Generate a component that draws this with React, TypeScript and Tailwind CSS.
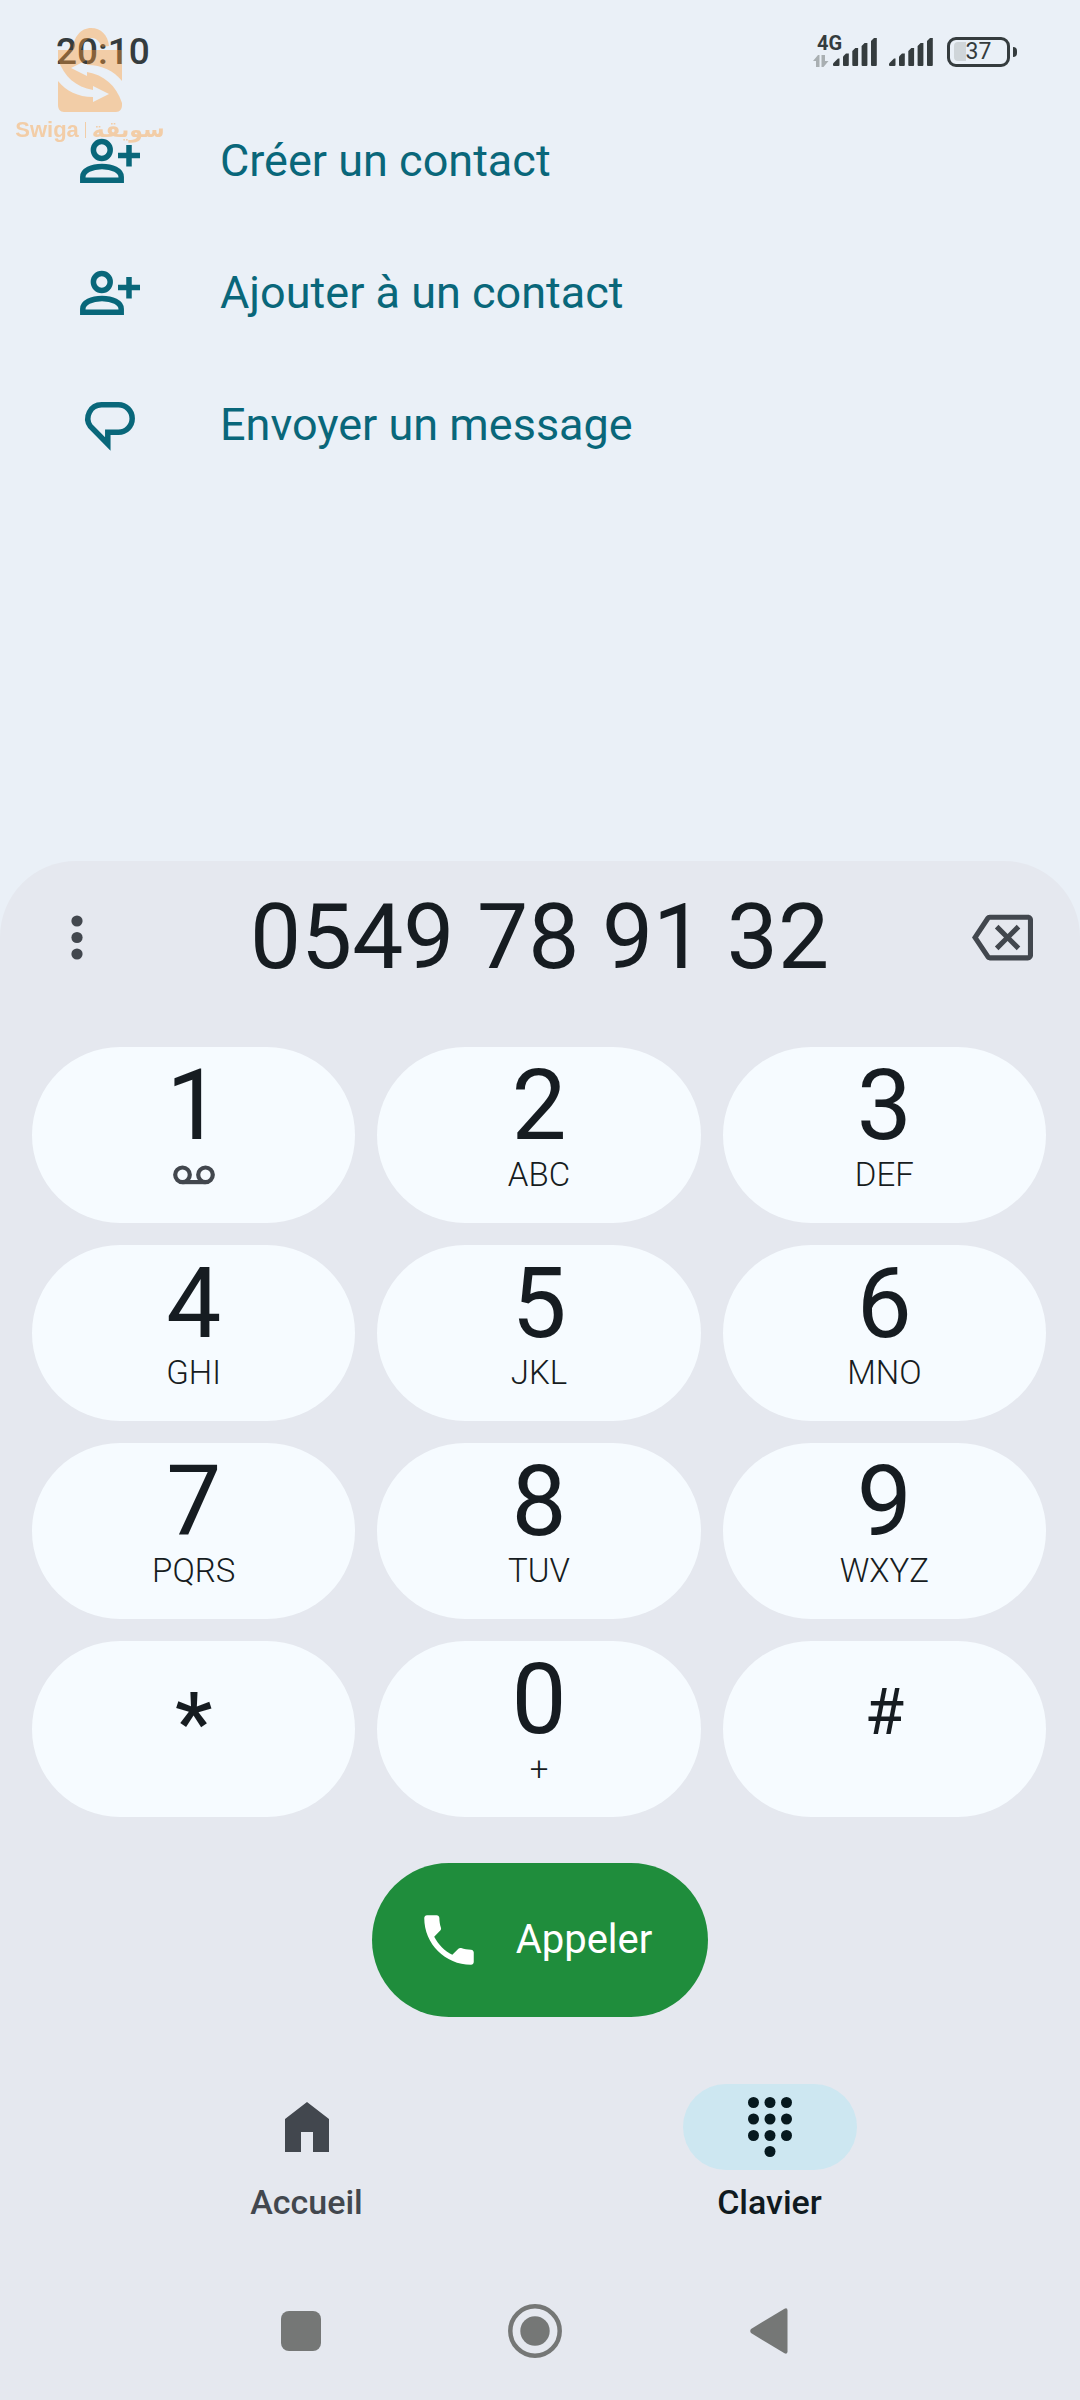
import { MdOutlineBackspace, MdPhone } from 'react-icons/md'

type Key = {
  digit: string
  letters?: string
}

const KEYS: Key[] = [
  { digit: '1' },
  { digit: '2', letters: 'ABC' },
  { digit: '3', letters: 'DEF' },
  { digit: '4', letters: 'GHI' },
  { digit: '5', letters: 'JKL' },
  { digit: '6', letters: 'MNO' },
  { digit: '7', letters: 'PQRS' },
  { digit: '8', letters: 'TUV' },
  { digit: '9', letters: 'WXYZ' },
  { digit: '*' },
  { digit: '0', letters: '+' },
  { digit: '#' },
]

const DIGIT_STYLES: Record<string, string> = {
  '*': 'text-[84px] leading-[144px] font-medium',
  '#': 'text-[64px] leading-[124px]',
}

const SignalBars = () => (
  <svg width="45" height="30" viewBox="0 0 45 30" fill="currentColor" aria-hidden="true">
    <path d="M0 28v-1.500l5-5h1.500v6.500a1 1 0 0 1-1 1h-4.500a1 1 0 0 1-1-1z" />
    <path d="M10 19.500l3-3h2.800v11.500a1 1 0 0 1-1 1h-3.800a1 1 0 0 1-1-1z" />
    <path d="M19.300 14l3-3h2.800v17a1 1 0 0 1-1 1h-3.800a1 1 0 0 1-1-1z" />
    <path d="M28.600 9l3-3h2.800v22a1 1 0 0 1-1 1h-3.800a1 1 0 0 1-1-1z" />
    <path d="M38 4l3-3h2.800v27a1 1 0 0 1-1 1h-3.800a1 1 0 0 1-1-1z" />
  </svg>
)

const Battery = ({ level }: { level: number }) => (
  <div className="flex items-center gap-[3px]">
    <div className="relative flex h-[30px] w-[63px] items-center justify-center rounded-[9px] border-[3px] border-current">
      <span className="absolute left-1 h-[19px] w-3 rounded-l-sm bg-[#cfd5d9]" />
      <span className="relative text-[23px] leading-6">{level}</span>
    </div>
    <span className="h-[10px] w-1 rounded-r-sm bg-current" />
  </div>
)

const StatusBar = () => (
  <header className="flex h-[95px] items-center justify-between pt-2 pr-[63px] pl-14 text-[#353c3e]">
    <span className="text-[37px] leading-10 font-medium">20:10</span>
    <div className="flex items-center">
      <div className="relative">
        <span className="absolute -top-1 -left-4 text-[20px] leading-5 font-bold">4G</span>
        <svg className="absolute bottom-0 -left-5" width="16" height="12" viewBox="0 0 16 12" fill="#a9afb2" aria-hidden="true">
          <path d="M0 6l5-6h1.500v12H3V6zM8.500 0H12v6h3.500l-5 6h-2z" />
        </svg>
        <SignalBars />
      </div>
      <div className="ml-[11px]">
        <SignalBars />
      </div>
      <div className="ml-[13px]">
        <Battery level={37} />
      </div>
    </div>
  </header>
)

const Watermark = () => (
  <div className="pointer-events-none absolute top-7 left-[15px] flex w-[150px] flex-col items-center text-[#ff9a32] opacity-40">
    <svg width="64" height="84" viewBox="0 0 64 84" aria-hidden="true">
      <mask id="arrows">
        <rect width="64" height="84" fill="#fff" />
        <path d="M13 40L29 32v5c15 0 27 6 35 16v22C58 57 46 47 29 44v4z" fill="#000" />
        <path d="M51 66L35 74v-5C20 69 8 63 0 53V31c6 18 18 28 35 31v-4z" fill="#000" />
      </mask>
      <g mask="url(#arrows)" fill="currentColor">
        <path d="M0 22h15C15 9 23 0 33 0c10 0 17 7 18 18l-7 1c-3-6-6-9-10-9-5 0-9 4-11 12h41v55c0 4-2 7-6 7H6c-4 0-6-3-6-7z" />
      </g>
    </svg>
    <div className="flex items-center gap-[6px] text-[22px] leading-9 font-bold whitespace-nowrap">
      <span className="font-['Liberation_Sans',sans-serif]">Swiga</span>
      <span className="h-4 w-px bg-current" />
      <span lang="ar" dir="rtl" className="font-['DejaVu_Sans',sans-serif]">
        سويقة
      </span>
    </div>
  </div>
)

const PersonAddIcon = () => (
  <svg width="68" height="60" viewBox="76 130 68 60" fill="none" stroke="currentColor" strokeWidth="5.500" aria-hidden="true">
    <circle cx="101.800" cy="149" r="8.400" />
    <path d="M82.800 179.300v-3.300c0-6.500 9-10.500 19.200-10.500s19.200 4 19.200 10.500v3.300z" />
    <path d="M118 154.500h22M129 144v21.500" />
  </svg>
)

const MessageIcon = () => (
  <svg width="68" height="60" viewBox="-4 0 68 60" fill="none" stroke="currentColor" strokeWidth="5.500" aria-hidden="true">
    <path d="M38.500 9.800a13.700 13.700 0 0 1 0 27.400H27.800V49L10.300 31.300A13.700 13.700 0 0 1 21.500 9.800z" />
  </svg>
)

const VoicemailIcon = () => (
  <svg width="42" height="20" viewBox="0 0 42 20" fill="none" stroke="#42474e" strokeWidth="4.200" aria-hidden="true">
    <circle cx="9.500" cy="9.800" r="7.300" />
    <circle cx="32.500" cy="9.800" r="7.300" />
    <path d="M9.500 17.100h23" />
  </svg>
)

const HomeIcon = () => (
  <svg width="44" height="50" viewBox="0 0 44 50" fill="currentColor" aria-hidden="true">
    <path d="M22 0l22 17v33H28V30H16v20H0V17z" />
  </svg>
)

const DialpadIcon = () => (
  <svg width="44" height="60" viewBox="0 0 44 60" fill="currentColor" aria-hidden="true">
    {[5.5, 22, 38.5].map((y) => [5.5, 22, 38.5].map((x) => <circle key={`${x}-${y}`} cx={x} cy={y} r="5.500" />))}
    <circle cx="22" cy="54.500" r="5.500" />
  </svg>
)

const ACTIONS = [
  { label: 'Créer un contact', icon: <PersonAddIcon /> },
  { label: 'Ajouter à un contact', icon: <PersonAddIcon /> },
  { label: 'Envoyer un message', icon: <MessageIcon /> },
]

const ActionList = () => (
  <ul className="text-[#09677a]">
    {ACTIONS.map((action) => (
      <li key={action.label}>
        <button type="button" className="flex h-[132px] w-full items-center gap-[76px] px-[76px] text-left">
          {action.icon}
          <span className="text-[45px] leading-[52px]">{action.label}</span>
        </button>
      </li>
    ))}
  </ul>
)

const KeyButton = ({ digit, letters }: Key) => (
  <button type="button" className="flex h-[176px] flex-col items-center rounded-full bg-[#f6fbff] pt-[10px] text-[#161c21]">
    <span className={DIGIT_STYLES[digit] ?? 'text-[98px] leading-[98px]'}>{digit}</span>
    {digit === '1' && (
      <span className="mt-[10px]">
        <VoicemailIcon />
      </span>
    )}
    {letters && <span className="mt-1 text-[33px] leading-8 font-light">{letters}</span>}
  </button>
)

const SystemBar = () => (
  <div className="mt-10 flex h-[138px] items-center justify-center gap-[174px] pr-[10px] text-[#757776]">
    <button type="button" aria-label="Applications récentes" className="flex h-15 w-15 items-center justify-center">
      <span className="h-10 w-10 rounded-lg bg-current" />
    </button>
    <button type="button" aria-label="Écran d'accueil" className="flex h-15 w-15 items-center justify-center">
      <svg width="54" height="54" viewBox="0 0 54 54" aria-hidden="true">
        <circle cx="27" cy="27" r="24.700" fill="none" stroke="currentColor" strokeWidth="4.500" />
        <circle cx="27" cy="27" r="14.700" fill="currentColor" />
      </svg>
    </button>
    <button type="button" aria-label="Retour" className="flex h-15 w-15 items-center justify-center">
      <svg width="38" height="46" viewBox="0 0 38 46" fill="currentColor" aria-hidden="true">
        <path d="M1 21L34.500.700Q37.500-.500 37.500 2.500v41Q37.500 46.500 34.500 45.300L1 25Q-.500 23 1 21z" />
      </svg>
    </button>
  </div>
)

const Dialer = () => (
  <section className="mt-auto rounded-t-[76px] bg-[#e5e8ef]">
    <div className="flex h-[152px] items-center justify-between px-[47px]">
      <button type="button" aria-label="Plus d'options" className="flex h-15 w-15 items-center justify-center text-[#42474e]">
        <svg width="12" height="45" viewBox="0 0 12 45" fill="currentColor" aria-hidden="true">
          <circle cx="6" cy="6" r="5.600" />
          <circle cx="6" cy="22.500" r="5.600" />
          <circle cx="6" cy="39" r="5.600" />
        </svg>
      </button>
      <output className="text-[91px] leading-[100px] text-[#161c21]">0549 78 91 32</output>
      <button type="button" aria-label="Effacer" className="text-[#42474e]">
        <MdOutlineBackspace size={61} />
      </button>
    </div>

    <div className="grid grid-cols-3 gap-[22px] pt-[34px] pr-[34px] pl-8">
      {KEYS.map((key) => (
        <KeyButton key={key.digit} {...key} />
      ))}
    </div>

    <div className="mt-[46px] flex justify-center">
      <button type="button" className="flex h-[154px] items-center gap-[34px] rounded-full bg-[#1f8d3c] pr-14 pl-11 text-white">
        <MdPhone size={66} />
        <span className="text-[40px] leading-12">Appeler</span>
      </button>
    </div>

    <nav className="mt-[67px] grid grid-cols-2 pr-[79px] pl-[75px]">
      <a href="#accueil" className="flex flex-col items-center gap-3 text-[#42474e]">
        <span className="flex h-[86px] w-[174px] items-center justify-center rounded-full">
          <HomeIcon />
        </span>
        <span className="text-[34px] leading-10 font-medium">Accueil</span>
      </a>
      <a href="#clavier" aria-current="page" className="flex flex-col items-center gap-3 text-[#101a20]">
        <span className="flex h-[86px] w-[174px] items-center justify-center rounded-full bg-[#cde7f1] text-[#06191f]">
          <DialpadIcon />
        </span>
        <span className="text-[34px] leading-10 font-medium">Clavier</span>
      </a>
    </nav>

    <SystemBar />
  </section>
)

export default function App() {
  return (
    <main className="relative flex min-h-screen flex-col bg-[#eaf0f7] font-[Roboto,sans-serif]">
      <StatusBar />
      <ActionList />
      <Dialer />
      <Watermark />
    </main>
  )
}
